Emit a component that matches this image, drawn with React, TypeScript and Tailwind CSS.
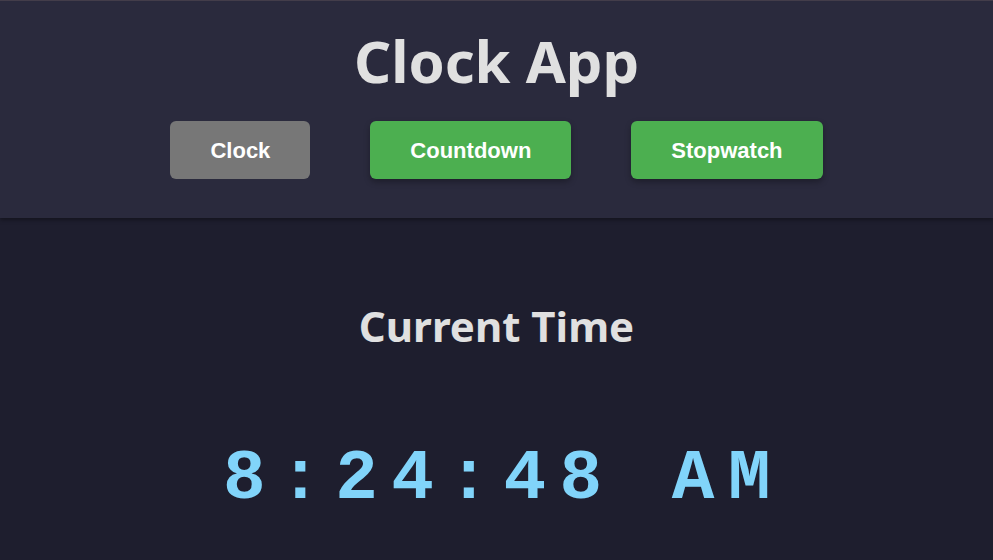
import { useState } from "react";

const tabs = ["Clock", "Countdown", "Stopwatch"];

const App = () => {
  const [active, setActive] = useState("Clock");

  return (
    <div className="min-h-screen bg-[#1e1e2e] font-['Noto_Sans',sans-serif]">
      <header className="bg-[#2a2a3d] border-t border-[#433d4a] shadow-[0_2px_4px_rgba(0,0,0,0.35)] pt-[28px] pb-[39px] flex flex-col items-center">
        <h1 className="text-[58px] leading-[64px] font-bold text-[#e0e0e0]">Clock App</h1>
        <nav className="mt-[28px] flex gap-[60px]">
          {tabs.map((t) => (
            <button
              key={t}
              onClick={() => setActive(t)}
              className={
                active === t
                  ? "h-[58px] px-[40px] rounded-md bg-[#777777] text-white text-[22px] font-bold font-['Liberation_Sans',sans-serif]"
                  : "h-[58px] px-[40px] rounded-md bg-[#4caf50] text-white text-[22px] font-bold font-['Liberation_Sans',sans-serif] shadow-[0_3px_6px_rgba(0,0,0,0.3)]"
              }
            >
              {t}
            </button>
          ))}
        </nav>
      </header>

      <main className="flex flex-col items-center pt-[80px]">
        <h2 className="text-[42px] leading-[56px] font-bold text-[#e0e0e0]">Current Time</h2>
        <div className="mt-[80px] pl-[14px] text-[71px] leading-[90px] font-bold tracking-[13.5px] text-[#81d4fa] font-['Liberation_Mono',monospace]">
          8:24:48 AM
        </div>
      </main>
    </div>
  );
};

export default App;
